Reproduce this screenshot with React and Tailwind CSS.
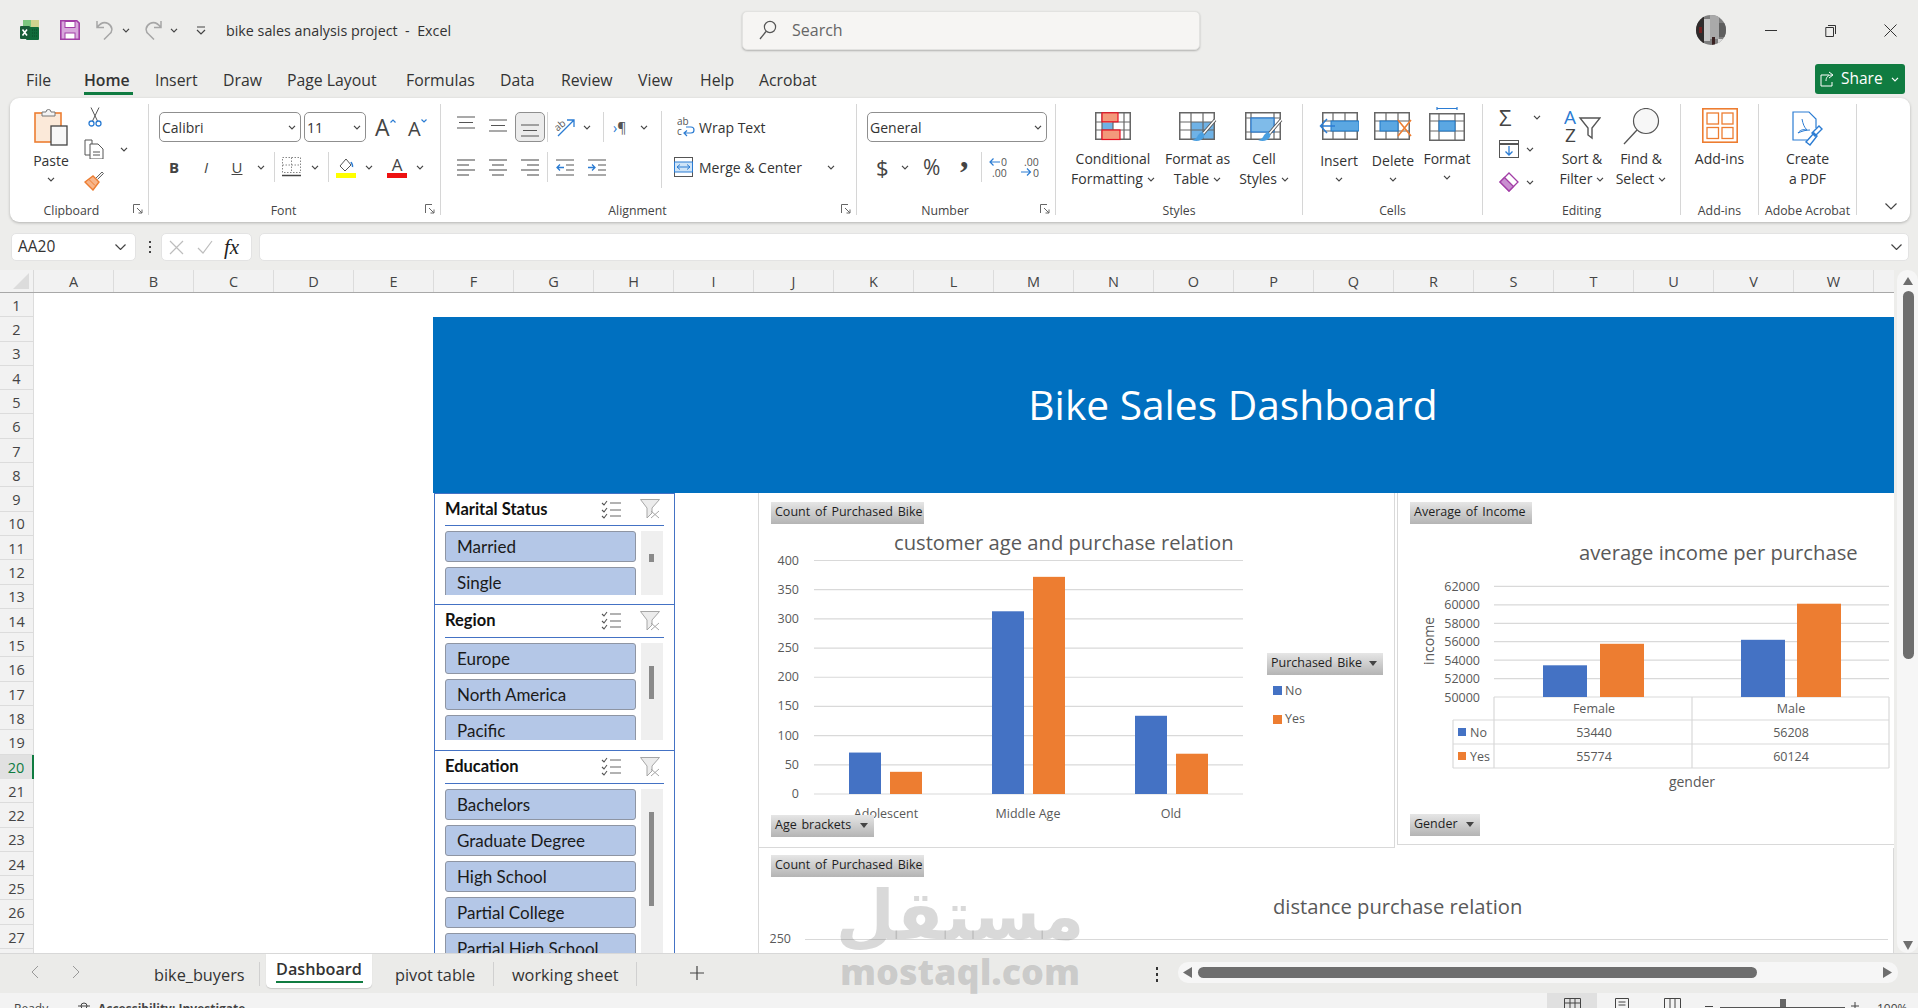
import { Fragment } from "react";

const COLS = "ABCDEFGHIJKLMNOPQRSTUVW".split("");
const ROWS = Array.from({ length: 28 }, (_, i) => i + 1);
const TABS = [
  ["File", "w-[58px]"], ["Home", "w-[71px]"], ["Insert", "w-[68px]"], ["Draw", "w-[64px]"],
  ["Page Layout", "w-[119px]"], ["Formulas", "w-[94px]"], ["Data", "w-[61px]"], ["Review", "w-[77px]"],
  ["View", "w-[62px]"], ["Help", "w-[59px]"], ["Acrobat", "w-[70px]"],
];
const BLUE = "#4472c4";
const ORANGE = "#ed7d31";

function Chev({ className = "" }) {
  return (
    <svg width="8" height="5" viewBox="0 0 8 5" className={"shrink-0 " + className}>
      <path d="M1 .8 4 3.8 7 .8" fill="none" stroke="#444" strokeWidth="1.2" />
    </svg>
  );
}

function Launcher() {
  return (
    <svg width="10" height="10" viewBox="0 0 10 10" className="shrink-0 mr-[5px] mt-[2px]">
      <path d="M.5 9V.5H7M4 4l5 5M9 5.5V9H5.5" fill="none" stroke="#666" strokeWidth="1" />
    </svg>
  );
}

function Group({ className, label, launcher, shift, children }) {
  return (
    <div className={"flex flex-col h-[111px] shrink-0 border-r border-[#d6d6d6] " + className}>
      <div className="flex h-[96px]">{children}</div>
      <div className="flex items-center h-[15px]">
        <div className={"flex-1 text-center text-[12.3px] leading-[21px] h-[15px] text-[#444] whitespace-nowrap " + (shift ? "pr-[7px]" : "")}>{label}</div>
        {launcher && <Launcher />}
      </div>
    </div>
  );
}

function Line({ children, chev }) {
  return (
    <div className="flex items-center justify-center gap-[4px] h-[20px] text-[14px] leading-[20px] whitespace-nowrap text-[#333]">
      {children}
      {chev && <Chev />}
    </div>
  );
}

function Big({ className, iconClass, icon, lines, chev, under }) {
  return (
    <div className={"flex flex-col items-center shrink-0 " + className}>
      <div className={iconClass}>{icon}</div>
      {lines.map((l, i) => (
        <Line key={l} chev={chev && i === lines.length - 1}>{l}</Line>
      ))}
      {under && <Chev className="mt-[6px]" />}
    </div>
  );
}

function Sep({ className = "" }) {
  return <div className={"w-px h-[30px] bg-[#d6d6d6] shrink-0 " + className} />;
}

function Select({ className, value }) {
  return (
    <div className={"flex items-center justify-between h-[30px] border border-[#8f8f8f] rounded-[5px] bg-white pl-[2px] pr-[4px] text-[14px] text-[#333] shrink-0 " + className}>
      {value}
      <Chev />
    </div>
  );
}

/* ---------- ribbon drawings ---------- */
function ExcelLogo() {
  return (
    <svg width="20" height="20" viewBox="0 0 20 20" className="shrink-0">
      <rect x="3" y="0" width="8" height="8" fill="#7cc77f" />
      <rect x="11" y="0" width="8" height="8" fill="#cfd38f" />
      <rect x="6" y="7" width="13" height="13" rx="1" fill="#0f6b3a" />
      <rect x="0" y="6" width="10" height="13" rx="1" fill="#185c37" />
      <path d="M2.5 9.5 7 15.5M7 9.5 2.5 15.5" stroke="#fff" strokeWidth="1.6" />
      <path d="M12 10h6M12 13h6M12 16h6" stroke="#0a4a28" strokeWidth="1" strokeDasharray="1 1" />
    </svg>
  );
}

function SaveIcon() {
  return (
    <svg width="20" height="20" viewBox="0 0 20 20" className="shrink-0">
      <path d="M.8.8h16l2.4 2.4v16H.8z" fill="#d8a8dc" stroke="#a23ea6" strokeWidth="1.6" />
      <rect x="5" y="1.5" width="10" height="6" fill="#fff" stroke="#a23ea6" />
      <rect x="5" y="13" width="10" height="6" fill="#fff" stroke="#a23ea6" />
    </svg>
  );
}

function Undo({ flip }) {
  return (
    <svg width="18" height="20" viewBox="0 0 18 20" className="shrink-0" style={flip ? { transform: "scaleX(-1)" } : undefined}>
      <path d="M1 1v6.5h7M1 7.5C4 3.5 8 1.500 12 3.5c5 3 5 8 1 11l-5 5" fill="none" stroke="#a6a6a6" strokeWidth="1.5" />
    </svg>
  );
}

function SearchIcon() {
  return (
    <svg width="18" height="20" viewBox="0 0 18 20" className="shrink-0">
      <circle cx="11" cy="7" r="5.6" fill="none" stroke="#555" strokeWidth="1.2" />
      <path d="M7 11.5 1 19" stroke="#555" strokeWidth="1.3" />
    </svg>
  );
}

function Avatar() {
  return (
    <svg width="30" height="30" viewBox="0 0 30 30" className="ml-[496px] shrink-0">
      <defs>
        <clipPath id="face"><circle cx="15" cy="15" r="15" /></clipPath>
      </defs>
      <g clipPath="url(#face)">
        <rect width="30" height="30" fill="#7d7d7d" />
        <rect width="8" height="30" fill="#2f2b2b" />
        <rect x="8" y="4" width="6" height="22" fill="#c7c7c7" />
        <rect x="14" y="0" width="9" height="24" fill="#a9a9a9" />
        <rect x="23" y="8" width="7" height="14" fill="#5e5e5e" />
        <rect x="16" y="22" width="3" height="8" fill="#3a2222" />
        <rect x="3" y="12" width="3" height="6" fill="#6e1f1f" />
        <rect x="22" y="24" width="8" height="6" fill="#d9d9d9" />
      </g>
    </svg>
  );
}

function PasteIcon() {
  return (
    <svg width="34" height="38" viewBox="0 0 34 38">
      <rect x="1" y="5" width="26" height="29" fill="#fbe9d9" stroke="#ed7d31" strokeWidth="1.6" />
      <path d="M8 8V4h4a2.5 2.5 0 0 1 5 0h4v4z" fill="#f3f3f3" stroke="#777" />
      <rect x="17" y="18" width="16" height="19" fill="#f7f7f7" stroke="#444" strokeWidth="1.3" />
    </svg>
  );
}

function Scissors() {
  return (
    <svg width="14" height="20" viewBox="0 0 14 20">
      <path d="M3 .5 9.5 14M11 .5 4.5 14" stroke="#555" strokeWidth="1" fill="none" />
      <circle cx="3.5" cy="16.5" r="2.5" fill="none" stroke="#2b7cd3" strokeWidth="1.3" />
      <circle cx="10.5" cy="16.5" r="2.5" fill="none" stroke="#2b7cd3" strokeWidth="1.3" />
    </svg>
  );
}

function CopyIcon() {
  return (
    <svg width="20" height="20" viewBox="0 0 20 20">
      <path d="M1 1h7v15H1z" fill="#fff" stroke="#555" />
      <path d="M6 5h8l5 5v10H6z" fill="#fff" stroke="#555" />
      <path d="M9 13h7M9 16h7" stroke="#555" />
    </svg>
  );
}

function BrushIcon() {
  return (
    <svg width="20" height="20" viewBox="0 0 20 20">
      <path d="M12 7 18 1l1.5 1.5-6 6" fill="#f3f3f3" stroke="#666" />
      <path d="M1 11 9 5l6 6-6 8z" fill="#f7b58a" stroke="#ed7d31" strokeWidth="1.4" />
      <path d="M5 8.500 11 14.5" stroke="#ed7d31" />
    </svg>
  );
}

function FontSize({ up }) {
  return (
    <div className="flex items-start w-[20px] h-[18px] shrink-0">
      <span className={"text-[#444] " + (up ? "text-[23px] leading-[19px]" : "text-[20px] leading-[19px] mt-[1px]")}>A</span>
      <svg width="6" height="4" viewBox="0 0 6 4" className="mt-[1px] shrink-0">
        <path d={up ? "M.5 3.5 3 1l2.5 2.5" : "M.5.5 3 3 5.5.5"} fill="none" stroke="#2b7cd3" strokeWidth="1.2" />
      </svg>
    </div>
  );
}

function Bars({ className = "" }) {
  return (
    <svg width="18" height="13" viewBox="0 0 18 13" className={"shrink-0 " + className}>
      <path d="M0 1h18M2 6.500h14M0 12h18" stroke="#555" strokeWidth="1.1" />
    </svg>
  );
}

function AlignH({ kind }) {
  const x = { l: [[0, 18], [0, 12], [0, 18], [0, 12]], c: [[0, 18], [3, 15], [0, 18], [3, 15]], r: [[0, 18], [6, 18], [0, 18], [6, 18]] }[kind];
  return (
    <svg width="18" height="17" viewBox="0 0 18 17" className="shrink-0">
      {x.map((p, i) => (
        <path key={i} d={"M" + p[0] + " " + (1 + i * 5) + "H" + p[1]} stroke="#555" strokeWidth="1.1" />
      ))}
    </svg>
  );
}

function Indent({ out }) {
  return (
    <svg width="18" height="17" viewBox="0 0 18 17" className="shrink-0">
      <path d="M0 1h18M0 16h18M10 6h8M10 11h8" stroke="#555" strokeWidth="1.1" />
      <path d={out ? "M8 8.500H1M4 5.500 1 8.500l3 3" : "M0 8.500h7M4 5.500l3 3-3 3"} fill="none" stroke="#2b7cd3" strokeWidth="1.3" />
    </svg>
  );
}

function CellGrid({ cols, rows, w, h, x = 0, y = 0 }) {
  return (
    <>
      <rect x={x + 0.75} y={y + 0.75} width={w - 1.5} height={h - 1.5} fill="none" stroke="#666" strokeWidth="1.5" />
      {cols.map((c) => <path key={"c" + c} d={"M" + c + " " + y + "V" + (y + h)} stroke="#666" strokeWidth="1.2" />)}
      {rows.map((r) => <path key={"r" + r} d={"M" + x + " " + r + "H" + (x + w)} stroke="#666" strokeWidth="1.2" />)}
    </>
  );
}

function PaintBrush() {
  return (
    <g>
      <path d="M36 8 24 22" stroke="#555" strokeWidth="3.4" />
      <path d="M36 8 24 22" stroke="#fff" strokeWidth="1.6" />
      <path d="M23 20c-3 1-4 3-5 5-1 2-4 3-5 3 4 2 10 1 12-3 1-2 0-4-2-5z" fill="#4a9fe0" />
    </g>
  );
}

function CondIcon() {
  return (
    <svg width="36" height="29" viewBox="0 0 36 29">
      <rect x="7" y="11" width="11" height="7" fill="#6fb2e6" />
      <CellGrid cols={[7, 18, 29]} rows={[10, 18]} w={36} h={28} />
      <rect x="7" y=".8" width="16" height="9" fill="#f3997b" stroke="#e81123" strokeWidth="1.2" />
      <rect x="7" y="18" width="18" height="9.5" fill="#f3997b" stroke="#e81123" strokeWidth="1.2" />
    </svg>
  );
}

function TableIcon() {
  return (
    <svg width="38" height="31" viewBox="0 0 38 31">
      <rect x="12" y="10" width="23" height="18" fill="#6fb2e6" />
      <CellGrid cols={[12, 24]} rows={[10, 18]} w={36} h={28} />
      <PaintBrush />
    </svg>
  );
}

function CellStyleIcon() {
  return (
    <svg width="38" height="31" viewBox="0 0 38 31">
      <CellGrid cols={[6, 29]} rows={[6, 20]} w={36} h={28} />
      <rect x="6" y="6" width="23" height="14" fill="#7fbbe9" stroke="#2b7cd3" strokeWidth="1.2" />
      <PaintBrush />
    </svg>
  );
}

function InsertCells() {
  return (
    <svg width="40" height="28" viewBox="0 0 40 28">
      <CellGrid cols={[14, 26]} rows={[9, 19]} x={3} w={36} h={28} />
      <rect x="12" y="9" width="28" height="10" fill="#5ba7e2" stroke="#1f78c8" />
      <path d="M16 14H2M8 7 1.5 14 8 21" fill="none" stroke="#2b7cd3" strokeWidth="1.5" />
    </svg>
  );
}

function DeleteCells() {
  return (
    <svg width="38" height="28" viewBox="0 0 38 28">
      <CellGrid cols={[12, 24]} rows={[9, 19]} w={36} h={28} />
      <rect x="6" y="9" width="18" height="10" fill="#5ba7e2" stroke="#1f78c8" />
      <path d="M24 8 37 24M37 8 24 24" stroke="#ed7d31" strokeWidth="1.6" />
    </svg>
  );
}

function FormatCells() {
  return (
    <svg width="36" height="34" viewBox="0 0 36 34">
      <path d="M8 1.5h20M8 0v3M28 0v3" stroke="#2b7cd3" strokeWidth="1.2" />
      <CellGrid cols={[10, 26]} rows={[14, 24]} y={6} w={36} h={28} />
      <rect x="10" y="14" width="16" height="10" fill="#5ba7e2" stroke="#1f78c8" />
    </svg>
  );
}

function SortIcon() {
  return (
    <svg width="37" height="34" viewBox="0 0 37 34">
      <text x="0" y="15" fontSize="19" fill="#2b7cd3">A</text>
      <text x="1" y="33" fontSize="19" fill="#444">Z</text>
      <path d="M16 9h20l-8 10v10l-4-3v-7z" fill="none" stroke="#555" strokeWidth="1.4" />
    </svg>
  );
}

function FindIcon() {
  return (
    <svg width="37" height="37" viewBox="0 0 37 37">
      <circle cx="23" cy="13" r="12.5" fill="#f7f7f7" stroke="#555" strokeWidth="1.2" />
      <path d="M14 22 1 36" stroke="#555" strokeWidth="1.3" />
    </svg>
  );
}

function FillDown() {
  return (
    <svg width="20" height="18" viewBox="0 0 20 18" className="shrink-0">
      <rect x=".5" y=".5" width="19" height="17" fill="#fff" stroke="#555" />
      <path d="M.5 4h19" stroke="#555" strokeWidth="2" />
      <path d="M10 6v9M6.500 11.500 10 15l3.500-3.500" fill="none" stroke="#2b7cd3" strokeWidth="1.3" />
    </svg>
  );
}

function Eraser() {
  return (
    <svg width="20" height="20" viewBox="0 0 20 20" className="shrink-0">
      <path d="M10 1 19 10 10 19 1 10z" fill="#fff" stroke="#a23ea6" strokeWidth="1.3" />
      <path d="M5.5 5.5 14.5 14.500 10 19 1 10z" fill="#c98fd0" stroke="#a23ea6" strokeWidth="1.3" />
    </svg>
  );
}

function AddinsIcon() {
  return (
    <svg width="36" height="35" viewBox="0 0 36 35">
      <rect x=".8" y=".8" width="34.4" height="33.4" fill="none" stroke="#ed7d31" strokeWidth="1.6" />
      <rect x="5" y="5" width="11.5" height="11" fill="none" stroke="#ed7d31" strokeWidth="1.3" />
      <rect x="20" y="5" width="11" height="11" fill="none" stroke="#ed7d31" strokeWidth="1.3" />
      <rect x="5" y="19.5" width="11.5" height="11" fill="none" stroke="#ed7d31" strokeWidth="1.3" />
      <rect x="20" y="19.5" width="11" height="11" fill="none" stroke="#ed7d31" strokeWidth="1.3" />
    </svg>
  );
}

function PdfIcon() {
  return (
    <svg width="32" height="36" viewBox="0 0 32 36">
      <path d="M15 29H1V1h16l7 7v9" fill="#fff" stroke="#2b7cd3" strokeWidth="1.2" />
      <path d="M10 8c1 5 2 8 5 11-4-1-7 0-9 3 4-2 8-3 12-3" fill="none" stroke="#2b7cd3" />
      <path d="M27 15l3 3-7 7-3-3zM22 22l3 3-7 9-4-3z" fill="#fff" stroke="#2b7cd3" strokeWidth="1.4" />
    </svg>
  );
}

function Decimal({ more }) {
  return (
    <svg width="20" height="21" viewBox="0 0 20 21" className="shrink-0">
      <text x={more ? 3 : 12} y="9" fontSize="10.5" fill="#555">{more ? ".00" : "0"}</text>
      <text x={more ? 12 : 3} y="20" fontSize="10.5" fill="#555">{more ? "0" : ".00"}</text>
      <path d={more ? "M0 15h9M6 11.500 9.500 15 6 18.500" : "M11 5H1M4.500 1.500 1 5l3.500 3.500"} fill="none" stroke="#2b7cd3" strokeWidth="1.2" />
    </svg>
  );
}

/* ---------- ribbon ---------- */
function Ribbon() {
  return (
    <div className="flex mx-[10px] w-[1900px] h-[124px] pt-[6px] bg-white rounded-[9px] shadow-[0_1px_3px_rgba(0,0,0,0.25)]">
      <Group className="w-[139px]" label="Clipboard" launcher>
        <div className="flex flex-col items-center w-[40px] ml-[21px] pt-[4px]">
          <PasteIcon />
          <div className="mt-[5px]"><Line>Paste</Line></div>
          <Chev className="mt-[6px]" />
        </div>
        <div className="flex flex-col ml-[13px] pt-[3px]">
          <div className="ml-[4px] h-[20px]"><Scissors /></div>
          <div className="flex items-center mt-[12px] h-[20px]"><CopyIcon /><Chev className="ml-[16px]" /></div>
          <div className="mt-[12px] h-[20px]"><BrushIcon /></div>
        </div>
      </Group>

      <Group className="w-[292px]" label="Font" launcher shift>
        <div className="flex flex-col pl-[10px] pt-[8px]">
          <div className="flex items-center">
            <Select className="w-[142px]" value="Calibri" />
            <Select className="w-[62px] ml-[3px]" value="11" />
            <div className="ml-[9px]"><FontSize up /></div>
            <div className="ml-[13px]"><FontSize /></div>
          </div>
          <div className="flex items-center h-[30px] mt-[10px] text-[#444]">
            <span className="ml-[8px] w-[14px] text-center text-[15px] font-bold">B</span>
            <span className="ml-[18px] w-[14px] text-center text-[15px] italic">I</span>
            <span className="ml-[17px] w-[14px] text-center text-[15px] underline">U</span>
            <Chev className="ml-[13px]" />
            <Sep className="ml-[9px]" />
            <svg width="19" height="20" viewBox="0 0 19 20" className="ml-[7px] shrink-0">
              <path d="M.5.5h18v15H.5zM9.500.5v15M.5 8h18" fill="none" stroke="#888" strokeDasharray="1.5 1.5" />
              <path d="M0 18.500h19" stroke="#444" strokeWidth="1.5" />
            </svg>
            <Chev className="ml-[10px]" />
            <Sep className="ml-[9px]" />
            <svg width="20" height="21" viewBox="0 0 20 21" className="ml-[7px] shrink-0">
              <path d="M4 9l6-7 5 6-6 6z" fill="#fff" stroke="#555" />
              <path d="M15 5c1 2 2 3 1.500 5" fill="none" stroke="#2b7cd3" strokeWidth="1.5" />
              <rect y="16" width="20" height="5" fill="#ffff00" />
            </svg>
            <Chev className="ml-[9px]" />
            <div className="flex flex-col items-center w-[20px] ml-[14px]">
              <span className="text-[17px] leading-[17px]">A</span>
              <div className="w-[20px] h-[5px] bg-[#ee1111]" />
            </div>
            <Chev className="ml-[9px]" />
          </div>
        </div>
      </Group>

      <Group className="w-[416px]" label="Alignment" launcher shift>
        <div className="flex flex-col w-[220px] pt-[8px]">
          <div className="flex items-center h-[30px]">
            <Bars className="ml-[16px] mb-[9px]" />
            <Bars className="ml-[14px] mb-[3px]" />
            <div className="flex items-center justify-center ml-[8px] w-[30px] h-[30px] bg-[#ececec] border border-[#8f8f8f] rounded-[5px]">
              <Bars className="mt-[7px]" />
            </div>
            <Sep className="ml-[2px]" />
            <svg width="21" height="19" viewBox="0 0 21 19" className="ml-[7px] shrink-0">
              <text x="0" y="11" fontSize="10" fill="#555" transform="rotate(-40 5 9)">ab</text>
              <path d="M3 18 19 2M12 2h7v7" fill="none" stroke="#2b7cd3" strokeWidth="1.3" />
            </svg>
            <Chev className="ml-[7px]" />
            <Sep className="ml-[12px]" />
            <span className="ml-[9px] w-[15px] text-[14px] text-[#555] whitespace-nowrap"><span className="text-[#2b7cd3]">›</span>¶</span>
            <Chev className="ml-[12px]" />
          </div>
          <div className="flex items-center h-[30px] mt-[10px]">
            <div className="ml-[16px]"><AlignH kind="l" /></div>
            <div className="ml-[14px]"><AlignH kind="c" /></div>
            <div className="ml-[14px]"><AlignH kind="r" /></div>
            <Sep className="ml-[8px]" />
            <div className="ml-[8px]"><Indent out /></div>
            <div className="ml-[14px]"><Indent /></div>
          </div>
        </div>
        <div className="w-px h-[77px] mt-[7px] bg-[#d6d6d6] shrink-0" />
        <div className="flex flex-col pt-[8px] ml-[12px]">
          <div className="flex items-center h-[30px]">
            <svg width="18" height="20" viewBox="0 0 18 20" className="ml-[3px] shrink-0">
              <text x="0" y="8" fontSize="10" fill="#555">ab</text>
              <text x="0" y="18" fontSize="10" fill="#555">c</text>
              <path d="M8 16h6c4 0 4-6 0-6H9M10 13.500 7 16l3 3" fill="none" stroke="#2b7cd3" strokeWidth="1.2" />
            </svg>
            <span className="ml-[4px] text-[14px] text-[#333] whitespace-nowrap">Wrap Text</span>
          </div>
          <div className="flex items-center h-[30px] mt-[10px]">
            <svg width="19" height="20" viewBox="0 0 19 20" className="shrink-0">
              <rect x=".5" y=".5" width="18" height="19" fill="#fff" stroke="#555" />
              <rect x=".5" y="5" width="18" height="10" fill="#cfe4f7" stroke="#2b7cd3" />
              <path d="M3 10h13M6 7.500 3 10l3 2.500M13 7.500l3 2.500-3 2.500" fill="none" stroke="#2b7cd3" />
            </svg>
            <span className="ml-[6px] w-[128px] text-[14px] text-[#333] whitespace-nowrap">Merge &amp; Center</span>
            <Chev />
          </div>
        </div>
      </Group>

      <Group className="w-[199px]" label="Number" launcher shift>
        <div className="flex flex-col pl-[10px] pt-[8px]">
          <Select className="w-[180px]" value="General" />
          <div className="flex items-center h-[30px] mt-[10px] text-[#444]">
            <span className="ml-[9px] w-[12px] text-[22px] leading-[30px]">$</span>
            <Chev className="ml-[13px]" />
            <span className="ml-[14px] w-[20px] text-[21px] leading-[30px]">%</span>
            <span className="ml-[17px] w-[10px] h-[30px] font-['Liberation_Serif'] text-[34px] leading-[30px] font-bold -mt-[22px]">,</span>
            <Sep className="ml-[11px]" />
            <div className="ml-[7px]"><Decimal /></div>
            <div className="ml-[12px]"><Decimal more /></div>
          </div>
        </div>
      </Group>

      <Group className="w-[247px]" label="Styles">
        <Big className="w-[92px] ml-[11px] pt-[8px]" iconClass="h-[37px]" icon={<CondIcon />} lines={["Conditional", "Formatting"]} chev />
        <Big className="w-[77px] pt-[8px]" iconClass="h-[37px]" icon={<TableIcon />} lines={["Format as", "Table"]} chev />
        <Big className="w-[56px] pt-[8px]" iconClass="h-[37px]" icon={<CellStyleIcon />} lines={["Cell", "Styles"]} chev />
      </Group>

      <Group className="w-[180px]" label="Cells">
        <Big className="w-[54px] ml-[9px] pt-[8px]" iconClass="h-[39px]" icon={<InsertCells />} lines={["Insert"]} under />
        <Big className="w-[54px] pt-[8px]" iconClass="h-[39px]" icon={<DeleteCells />} lines={["Delete"]} under />
        <Big className="w-[54px] pt-[3px]" iconClass="h-[42px]" icon={<FormatCells />} lines={["Format"]} under />
      </Group>

      <Group className="w-[198px]" label="Editing">
        <div className="flex flex-col w-[51px] ml-[16px] pt-[4px]">
          <div className="flex items-center h-[18px]">
            <span className="w-[18px] text-[22px] leading-[18px] text-[#444]">Σ</span>
            <Chev className="ml-[16px]" />
          </div>
          <div className="flex items-center h-[18px] mt-[14px]"><FillDown /><Chev className="ml-[7px]" /></div>
          <div className="flex items-center h-[20px] mt-[14px]"><Eraser /><Chev className="ml-[7px]" /></div>
        </div>
        <Big className="w-[64px] pt-[5px]" iconClass="h-[40px]" icon={<SortIcon />} lines={["Sort &", "Filter"]} chev />
        <Big className="w-[54px] pt-[4px]" iconClass="h-[41px]" icon={<FindIcon />} lines={["Find &", "Select"]} chev />
      </Group>

      <Group className="w-[78px]" label="Add-ins">
        <Big className="w-full pt-[4px]" iconClass="h-[41px]" icon={<AddinsIcon />} lines={["Add-ins"]} />
      </Group>

      <Group className="w-[98px]" label="Adobe Acrobat">
        <Big className="w-full pt-[7px]" iconClass="h-[38px]" icon={<PdfIcon />} lines={["Create", "a PDF"]} />
      </Group>

      <div className="flex-1 flex items-end justify-end pb-[12px] pr-[13px]">
        <svg width="12" height="7" viewBox="0 0 12 7"><path d="M.5.5 6 6 11.5.5" fill="none" stroke="#444" strokeWidth="1.2" /></svg>
      </div>
    </div>
  );
}

/* ---------- sheet objects ---------- */
function Slicer({ title, items, headClass, bodyClass, thumbClass, last }) {
  return (
    <div className={"bg-white border-x border-t border-[#4472c4] " + (last ? "flex-1 overflow-hidden" : "")}>
      <div className="mx-[10px] w-[219px]">
        <div className={"flex items-center justify-between border-b border-[#4472c4] " + headClass}>
          <span className="text-[16.500px] font-bold text-[#111] [font-family:Lato,sans-serif]">{title}</span>
          <div className="flex items-center gap-[19px] pr-[4px]">
            <svg width="20" height="19" viewBox="0 0 20 19">
              <path d="M1 3l2 2 3-4M1 10l2 2 3-4M1 16l2 2 3-4" fill="none" stroke="#555" strokeWidth="1.1" />
              <path d="M9 3h11M9 10h11M9 16h11" stroke="#666" strokeWidth="1.1" />
            </svg>
            <svg width="20" height="20" viewBox="0 0 20 20">
              <path d="M.5.5h19L12 9v5l-5 5V9z" fill="#ececec" stroke="#a6a6a6" />
              <path d="M11 12l8 7M19 12l-8 7" stroke="#a6a6a6" />
            </svg>
          </div>
        </div>
        <div className={"flex gap-[5px] mt-[5px] overflow-hidden " + bodyClass}>
          <div className="w-[191px] shrink-0">
            {items.map((item) => (
              <div key={item} className="flex items-center h-[31.5px] mb-[4.5px] pl-[11px] bg-[#b4c7e7] border border-[#8e95a3] rounded-[3px] text-[17px] text-[#1a1a1a] [font-family:Lato,sans-serif] whitespace-nowrap">
                {item}
              </div>
            ))}
          </div>
          <div className="w-[22px] bg-[#efefef] shrink-0">
            <div className={"ml-[8px] w-[5px] bg-[#8a8a8a] " + thumbClass} />
          </div>
        </div>
      </div>
    </div>
  );
}

function Pill({ className, arrow, children }) {
  return (
    <div className={"flex items-center justify-between h-[22px] pl-[4px] pr-[6px] bg-linear-to-b from-[#e6e6e6] to-[#b4b4b4] text-[12.5px] text-[#1f1f1f] whitespace-nowrap [word-spacing:1.5px] " + className}>
      {children}
      {arrow && (
        <svg width="8" height="5" viewBox="0 0 8 5"><path d="M0 0h8L4 5z" fill="#444" /></svg>
      )}
    </div>
  );
}

function AgeChart() {
  const y = (v) => 238 - v * 0.58375;
  const bars = [
    [90, 71, BLUE], [131, 38, ORANGE], [233, 313, BLUE], [274, 372, ORANGE], [376, 134, BLUE], [417, 69, ORANGE],
  ];
  return (
    <svg width="505" height="280" viewBox="0 0 505 280" className="font-['Open_Sans']">
      {[0, 50, 100, 150, 200, 250, 300, 350, 400].map((v) => (
        <Fragment key={v}>
          <path d={"M55 " + y(v) + "H484"} stroke="#d9d9d9" strokeWidth="1.2" />
          <text x="40" y={y(v) + 4} textAnchor="end" fontSize="12.5" fill="#595959">{v}</text>
        </Fragment>
      ))}
      {bars.map(([x, v, c]) => (
        <rect key={x} x={x} y={y(v)} width="32" height={v * 0.58375} fill={c} />
      ))}
      <text x="127" y="262" textAnchor="middle" fontSize="12.5" fill="#595959">Adolescent</text>
      <text x="269" y="262" textAnchor="middle" fontSize="12.5" fill="#595959">Middle Age</text>
      <text x="412" y="262" textAnchor="middle" fontSize="12.5" fill="#595959">Old</text>
    </svg>
  );
}

function IncomeChart() {
  const y = (v) => 131 - ((v - 50000) / 2000) * 18.43;
  const bars = [
    [145, 53440, BLUE], [202, 55774, ORANGE], [343, 56208, BLUE], [399, 60124, ORANGE],
  ];
  const label = { fontSize: 12.5, fill: "#595959" };
  return (
    <svg width="495" height="232" viewBox="0 0 495 232" className="font-['Open_Sans']">
      {[50000, 52000, 54000, 56000, 58000, 60000, 62000].map((v) => (
        <Fragment key={v}>
          <path d={"M96 " + y(v) + "H491"} stroke="#d9d9d9" strokeWidth="1.2" />
          <text x="82" y={y(v) + 4.5} textAnchor="end" {...label}>{v}</text>
        </Fragment>
      ))}
      {bars.map(([x, v, c]) => (
        <rect key={x} x={x} y={y(v)} width="44" height={131 - y(v)} fill={c} />
      ))}
      <path d="M96 131V202M294 131V202M491 131V202M55 154V202M55 154H491M55 178H491M55 202H491" fill="none" stroke="#d9d9d9" strokeWidth="1.2" />
      <text x="196" y="147" textAnchor="middle" {...label}>Female</text>
      <text x="393" y="147" textAnchor="middle" {...label}>Male</text>
      <text x="196" y="171" textAnchor="middle" {...label}>53440</text>
      <text x="393" y="171" textAnchor="middle" {...label}>56208</text>
      <text x="196" y="195" textAnchor="middle" {...label}>55774</text>
      <text x="393" y="195" textAnchor="middle" {...label}>60124</text>
      <rect x="60" y="162" width="8" height="8" fill={BLUE} />
      <rect x="60" y="186" width="8" height="8" fill={ORANGE} />
      <text x="72" y="171" {...label}>No</text>
      <text x="72" y="195" {...label}>Yes</text>
      <text x="294" y="221" textAnchor="middle" fontSize="14" fill="#595959">gender</text>
      <text transform="translate(36 75) rotate(-90)" textAnchor="middle" fontSize="14" fill="#595959">income</text>
    </svg>
  );
}

export default function App() {
  return (
    <div className="relative flex flex-col w-[1918px] h-[1008px] overflow-hidden bg-[#ededeb] text-[#333] font-['Open_Sans',sans-serif]">
      {/* title bar */}
      <div className="flex items-center h-[60px] shrink-0">
        <div className="ml-[20px]"><ExcelLogo /></div>
        <div className="ml-[20px]"><SaveIcon /></div>
        <div className="ml-[16px]"><Undo /></div>
        <Chev className="ml-[8px]" />
        <div className="ml-[14px]"><Undo flip /></div>
        <Chev className="ml-[8px]" />
        <svg width="10" height="9" viewBox="0 0 10 9" className="ml-[18px]"><path d="M1 1h8M1 4l4 4 4-4" fill="none" stroke="#444" strokeWidth="1.2" /></svg>
        <div className="ml-[20px] w-[516px] pt-[2px] text-[14.3px] text-[#333] whitespace-pre">bike sales analysis project  -  Excel</div>
        <div className="flex items-center w-[458px] h-[39px] pl-[16px] bg-[#f6f5f3] border border-[#e2e2e0] rounded-[5px] shadow-[0_1px_2px_rgba(0,0,0,0.25)]">
          <SearchIcon />
          <span className="ml-[15px] text-[16px] text-[#666]">Search</span>
        </div>
        <Avatar />
        <div className="ml-[39px] w-[12px] h-px bg-[#333]" />
        <svg width="12" height="13" viewBox="0 0 12 13" className="ml-[48px]"><path d="M3 1.5h7.500V10M.8 3.5h7.700v9H.8z" fill="none" stroke="#333" /></svg>
        <svg width="13" height="13" viewBox="0 0 13 13" className="ml-[47px]"><path d="M.5.5l12 12M12.500.5l-12 12" stroke="#333" /></svg>
      </div>

      {/* tabs */}
      <div className="flex h-[38px] shrink-0 pl-[26px] text-[15.8px] text-[#333]">
        {TABS.map(([name, w]) => (
          <div key={name} className={w}>
            {name === "Home" ? (
              <div className="inline-block h-[35px] w-[49px] border-b-[3px] border-[#107c41] font-semibold leading-[40px] whitespace-nowrap">{name}</div>
            ) : (
              <span className="leading-[40px]">{name}</span>
            )}
          </div>
        ))}
        <div className="flex items-center ml-auto mr-[13px] mt-[4px] h-[30px] w-[90px] pl-[5px] bg-[#107c41] rounded-[3px] text-white">
          <svg width="15" height="16" viewBox="0 0 15 16" className="shrink-0"><path d="M9 4H1v11h11v-4M6 10c0-4 2-6 6-6M9 1l4 3-4 3" fill="none" stroke="#fff" /></svg>
          <span className="ml-[6px] text-[15.5px]">Share</span>
          <svg width="8" height="5" viewBox="0 0 8 5" className="ml-[8px]"><path d="M1 .8 4 3.800 7 .8" fill="none" stroke="#fff" strokeWidth="1.2" /></svg>
        </div>
      </div>

      <Ribbon />

      {/* formula bar */}
      <div className="flex items-center h-[48px] shrink-0 pl-[11px] pr-[9px] pt-[2px]">
        <div className="flex items-center justify-between w-[125px] h-[28px] pl-[6px] pr-[9px] bg-white border border-[#e3e3e3] rounded-[5px] text-[15.5px]">
          AA20
          <svg width="11" height="6" viewBox="0 0 11 6"><path d="M.5.5 5.5 5.500 10.500.5" fill="none" stroke="#444" strokeWidth="1.2" /></svg>
        </div>
        <div className="flex flex-col gap-[3px] ml-[13px] w-[2px]">
          <div className="w-[2px] h-[2px] bg-[#444]" /><div className="w-[2px] h-[2px] bg-[#444]" /><div className="w-[2px] h-[2px] bg-[#444]" />
        </div>
        <div className="flex items-center w-[91px] h-[28px] ml-[10px] pl-[7px] bg-white border border-[#e3e3e3] rounded-[5px]">
          <svg width="15" height="15" viewBox="0 0 15 15"><path d="M1 1l13 13M14 1 1 14" stroke="#bdbdbd" strokeWidth="1.2" /></svg>
          <svg width="16" height="14" viewBox="0 0 16 14" className="ml-[13px]"><path d="M1 8l5 5L15 1" fill="none" stroke="#bdbdbd" strokeWidth="1.2" /></svg>
          <span className="ml-[11px] font-['Liberation_Serif'] italic text-[21px] leading-[20px] text-[#222]">fx</span>
        </div>
        <div className="flex items-center justify-end flex-1 h-[28px] ml-[7px] pr-[6px] bg-white border border-[#e3e3e3] rounded-[5px]">
          <svg width="11" height="6" viewBox="0 0 11 6"><path d="M.5.5 5.500 5.500 10.500.5" fill="none" stroke="#444" strokeWidth="1.2" /></svg>
        </div>
      </div>

      {/* grid + vertical scrollbar */}
      <div className="flex h-[683px] shrink-0">
        <div className="flex flex-col w-[1894px] shrink-0">
          <div className="flex h-[23px] shrink-0 bg-[#f2f2f2] border-b border-[#a8a8a8]">
            <div className="flex items-end justify-end w-[34px] shrink-0 pr-[4px] pb-[3px] border-r border-[#d9d9d9]">
              <svg width="16" height="16" viewBox="0 0 16 16"><path d="M16 0v16H0z" fill="#dcdcdc" /></svg>
            </div>
            {COLS.map((c) => (
              <div key={c} className="flex items-center justify-center w-[80px] pt-[1px] shrink-0 border-r border-[#dcdcdc] text-[14.5px] text-[#444]">{c}</div>
            ))}
          </div>
          <div className="flex flex-1 min-h-0">
            <div className="w-[34px] shrink-0 bg-[#f2f2f2] overflow-hidden">
              {ROWS.map((r) => (
                <div
                  key={r}
                  className={
                    r === 20
                      ? "flex items-center justify-center h-[24.3px] pt-[2px] bg-[#e1e1e1] border-r-[2px] border-[#107c41] text-[14.5px] text-[#107c41]"
                      : "flex items-center justify-center h-[24.3px] pt-[2px] border-r border-b border-[#dcdcdc] text-[14.5px] text-[#444]"
                  }
                >
                  {r}
                </div>
              ))}
            </div>
            <div className="flex flex-col flex-1 min-w-0 bg-white pl-[399px] pt-[23.5px] overflow-hidden">
              <div className="flex items-center justify-center h-[176px] shrink-0 pl-[139px] bg-[#0070c0] text-white text-[40.7px]">
                Bike Sales Dashboard
              </div>
              <div className="flex flex-1 min-h-0">
                {/* slicers */}
                <div className="flex flex-col w-[241px] ml-[1px] shrink-0">
                  <Slicer
                    title="Marital Status"
                    items={["Married", "Single"]}
                    headClass="h-[32px]"
                    bodyClass="h-[64px] mb-[9px]"
                    thumbClass="mt-[23px] h-[8px]"
                  />
                  <Slicer
                    title="Region"
                    items={["Europe", "North America", "Pacific"]}
                    headClass="h-[33px]"
                    bodyClass="h-[97px] mb-[10px]"
                    thumbClass="mt-[23px] h-[33px]"
                  />
                  <Slicer
                    last
                    title="Education"
                    items={["Bachelors", "Graduate Degree", "High School", "Partial College", "Partial High School"]}
                    headClass="h-[33px]"
                    bodyClass="h-[170px]"
                    thumbClass="mt-[23px] h-[94px]"
                  />
                </div>

                {/* charts */}
                <div className="flex flex-col w-[1136px] ml-[83px] shrink-0 min-h-0">
                  <div className="flex shrink-0 h-[355px]">
                    <div className="relative flex w-[637px] h-[355px] bg-white border-x border-b border-[#d9d9d9]">
                      <div className="w-[505px] shrink-0">
                        <Pill className="w-[153px] ml-[12px] mt-[9px]">Count of Purchased Bike</Pill>
                        <div className="ml-[135px] mt-[4px] text-[20.2px] leading-[28px] text-[#595959] whitespace-nowrap">customer age and purchase relation</div>
                        <AgeChart />
                      </div>
                      <div className="pl-[3px] pt-[160px]">
                        <Pill arrow className="w-[116px]">Purchased Bike</Pill>
                        <div className="flex items-center gap-[3px] mt-[7px] ml-[6px] text-[12.5px] text-[#595959]"><div className="w-[9px] h-[9px] bg-[#4472c4]" />No</div>
                        <div className="flex items-center gap-[3px] mt-[10px] ml-[6px] text-[12.5px] text-[#595959]"><div className="w-[9px] h-[9px] bg-[#ed7d31]" />Yes</div>
                      </div>
                      <Pill arrow className="absolute left-[12px] top-[322px] w-[103px]">Age brackets</Pill>
                    </div>
                    <div className="relative w-[497px] h-[352px] ml-[2px] bg-white border-l border-b border-[#d9d9d9]">
                      <Pill className="w-[122px] ml-[12px] mt-[9px]">Average of Income</Pill>
                      <div className="ml-[181px] mt-[14px] text-[20.2px] leading-[28px] text-[#595959] whitespace-nowrap">average income per purchase</div>
                      <IncomeChart />
                      <Pill arrow className="absolute left-[12px] top-[321px] w-[70px]">Gender</Pill>
                    </div>
                  </div>
                  <div className="flex-1 min-h-0 overflow-hidden bg-white border-x border-[#d9d9d9]">
                    <Pill className="w-[153px] ml-[12px] mt-[7px]">Count of Purchased Bike</Pill>
                    <div className="ml-[514px] mt-[15px] text-[20.2px] leading-[28px] text-[#595959] whitespace-nowrap">distance purchase relation</div>
                    <div className="flex items-center mt-[20px] mr-[5px] h-0">
                      <span className="w-[32px] text-right text-[12.5px] text-[#595959]">250</span>
                      <div className="flex-1 h-px ml-[14px] bg-[#d9d9d9]" />
                    </div>
                  </div>
                </div>
              </div>
            </div>
          </div>
        </div>

        {/* vertical scrollbar */}
        <div className="w-[24px] shrink-0 pl-[3px]">
          <div className="flex flex-col items-center h-[683px] pl-[2px] pr-[1px] pt-[7px] rounded-[10px] bg-[#f6f6f6]">
            <svg width="10" height="8" viewBox="0 0 10 8"><path d="M5 0l5 8H0z" fill="#6e6e6e" /></svg>
            <div className="w-[11px] h-[368px] mt-[6px] rounded-[6px] bg-[#6e6e6e]" />
            <svg width="10" height="9" viewBox="0 0 10 9" className="mt-[282px]"><path d="M0 0h10L5 9z" fill="#6e6e6e" /></svg>
          </div>
        </div>
      </div>

      {/* sheet tabs */}
      <div className="flex h-[40px] shrink-0 bg-[#ebebe9] border-t border-[#d8d8d8] text-[#333]">
        <div className="flex items-center w-[130px] h-[38px] shrink-0 pl-[31px] pb-[2px]">
          <svg width="8" height="14" viewBox="0 0 8 14"><path d="M7 1 1 7l6 6" fill="none" stroke="#999" /></svg>
          <svg width="8" height="14" viewBox="0 0 8 14" className="ml-[33px]"><path d="M1 1l6 6-6 6" fill="none" stroke="#999" /></svg>
        </div>
        <div className="flex items-center w-[130px] h-[24px] mt-[8px] pl-[24px] pt-[2px] border-r border-[#d0d0d0] text-[16.3px]">bike_buyers</div>
        <div className="flex flex-col items-center w-[106px] h-[34px] ml-[6px] bg-white rounded-b-[5px] shadow-[0_1px_1px_rgba(0,0,0,0.15)]">
          <span className="mt-[4px] text-[16.2px] font-semibold leading-[22px]">Dashboard</span>
          <div className="w-[87px] h-[2px] mt-[1px] bg-[#107c41]" />
        </div>
        <div className="flex items-center w-[122px] h-[24px] mt-[8px] pl-[23px] pt-[2px] border-r border-[#d0d0d0] text-[16.3px]">pivot table</div>
        <div className="flex items-center w-[143px] h-[24px] mt-[8px] pl-[18px] pt-[2px] border-r border-[#d0d0d0] text-[16.3px]">working sheet</div>
        <svg width="14" height="14" viewBox="0 0 14 14" className="ml-[53px] mt-[12px]"><path d="M7 0v14M0 7h14" stroke="#444" strokeWidth="1.2" /></svg>
        <div className="flex flex-col gap-[3px] ml-[452px] mt-[13px] w-[2px]">
          <div className="w-[2px] h-[3px] bg-[#333]" /><div className="w-[2px] h-[3px] bg-[#333]" /><div className="w-[2px] h-[3px] bg-[#333]" />
        </div>
        <div className="flex items-center w-[720px] h-[21px] ml-[20px] mt-[8px] pl-[5px] rounded-[10px] bg-[#f6f6f6]">
          <svg width="9" height="11" viewBox="0 0 9 11"><path d="M9 0v11L0 5.5z" fill="#6e6e6e" /></svg>
          <div className="w-[559px] h-[11px] ml-[6px] rounded-[6px] bg-[#6e6e6e]" />
          <svg width="9" height="11" viewBox="0 0 9 11" className="ml-[126px]"><path d="M0 0v11l9-5.5z" fill="#6e6e6e" /></svg>
        </div>
      </div>

      {/* status bar */}
      <div className="flex h-[15px] shrink-0 overflow-hidden bg-[#f3f3f3] text-[12px] text-[#444]">
        <div className="flex w-[1547px] shrink-0">
          <span className="ml-[14px] w-[62px] leading-[32px]">Ready</span>
          <svg width="16" height="16" viewBox="0 0 16 16" className="mt-[9px]"><circle cx="8" cy="4" r="3" fill="none" stroke="#444" /><path d="M2 4h12" stroke="#444" /></svg>
          <span className="ml-[6px] font-bold leading-[32px]">Accessibility: Investigate</span>
        </div>
        <div className="flex items-start justify-center w-[50px] h-[15px] shrink-0 bg-[#e0e0e0] pt-[5px]">
          <svg width="17" height="14" viewBox="0 0 17 14"><path d="M.5.5h16v13H.5zM.5 5h16M6 .5v13M11 .5v13" fill="none" stroke="#444" /></svg>
        </div>
        <svg width="14" height="14" viewBox="0 0 14 14" className="ml-[18px] mt-[5px] shrink-0"><path d="M.5.5h13v13H.5zM3.500 4h7M3.500 7h7" fill="none" stroke="#444" /></svg>
        <svg width="17" height="14" viewBox="0 0 17 14" className="ml-[35px] mt-[5px] shrink-0"><path d="M.5.5h16v13H.5zM6 .5v13M11 .5v13" fill="none" stroke="#444" /></svg>
        <div className="ml-[24px] mt-[13px] w-[8px] h-px bg-[#444] shrink-0" />
        <div className="flex items-end justify-center ml-[7px] mt-[7px] w-[125px] h-[8px] border-b border-[#555] shrink-0">
          <div className="w-[6px] h-[8px] bg-[#666]" />
        </div>
        <svg width="8" height="8" viewBox="0 0 8 8" className="ml-[6px] mt-[9px] shrink-0"><path d="M4 0v8M0 4h8" stroke="#444" /></svg>
        <span className="ml-[18px] leading-[32px]">100%</span>
      </div>

      {/* watermark over everything */}
      <div className="absolute left-[844px] top-[870px] flex flex-col items-center w-[232px] pointer-events-none text-[rgba(110,110,110,0.26)]">
        <span dir="rtl" className="font-['DejaVu_Sans'] font-bold text-[68px] leading-[92px] whitespace-nowrap">مستقل</span>
        <span className="font-extrabold text-[36px] leading-[44px] -mt-[12px]">mostaql.com</span>
      </div>
    </div>
  );
}
